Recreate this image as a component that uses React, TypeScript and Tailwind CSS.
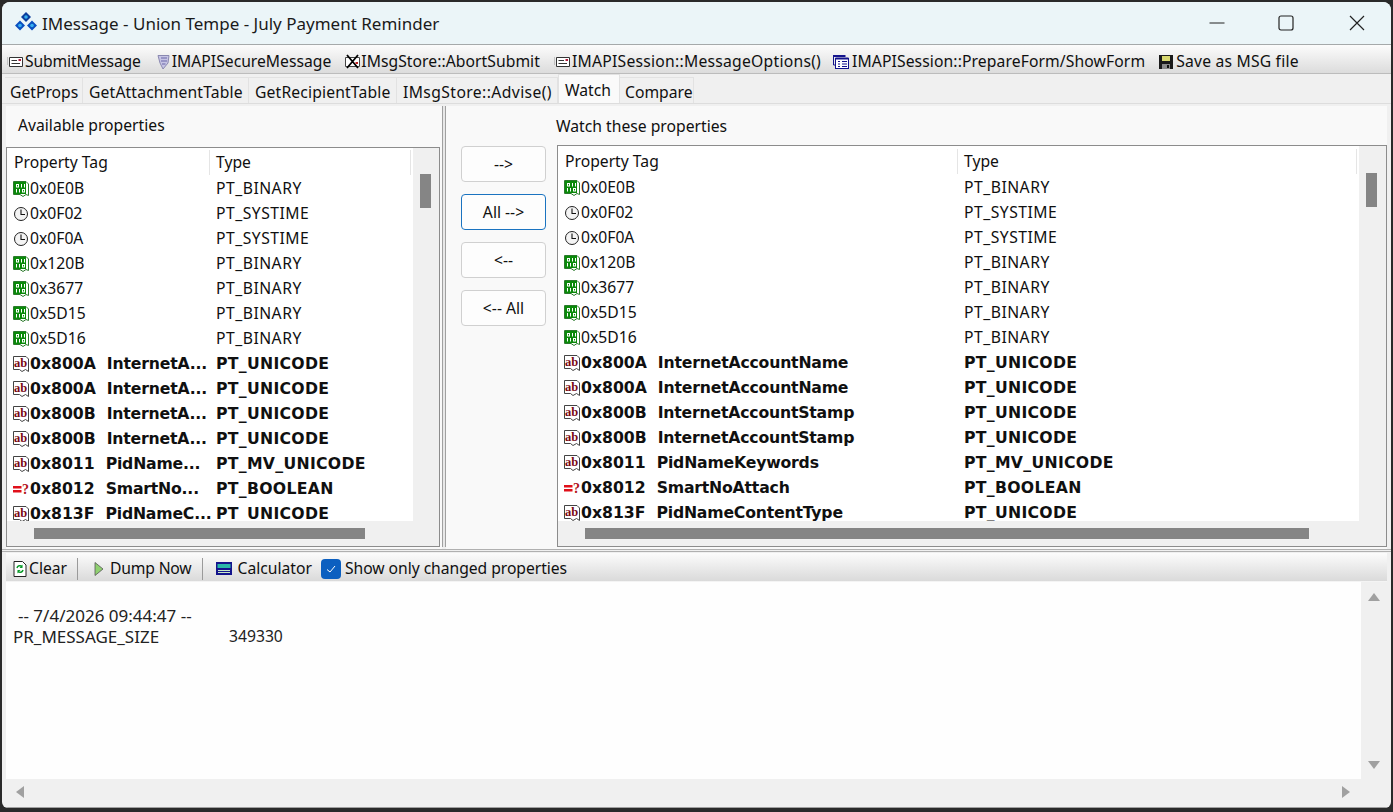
import React from 'react';

const BinaryIcon = () => (
  <svg width="16" height="16" viewBox="0 0 16 16" className="shrink-0">
    <path d="M0.5 0.5H13L15.500 3V14.500L13 13.500L10 15.500L7 13.500H0.500Z" fill="#fff" stroke="#2c7a2c" />
    <rect x="1" y="1" width="12" height="12" fill="#0a8a0a" />
    <path fillRule="evenodd" d="M3 3h3v3.500H3zM4 4v1.500h1V4zM8 3h1v3.500H8zM11 3h1v3.500h-1zM3 8h1v3.500H3zM6 8h1v3.500H6zM9 8h3v3.500H9zM10 9v1.500h1V9z" fill="#fff" />
  </svg>
);

const ClockIcon = () => (
  <svg width="16" height="16" viewBox="0 0 16 16" className="shrink-0">
    <circle cx="8" cy="8" r="6.500" fill="#f4f4f4" stroke="#222" strokeWidth="1" />
    <path d="M8 3.500V8.500H12" fill="none" stroke="#111" strokeWidth="1.100" />
  </svg>
);

const TextIcon = () => (
  <svg width="16" height="16" viewBox="0 0 16 16" className="shrink-0">
    <path d="M0.500 0.500H13L15.500 3V15.500L12.500 13.500L9 15.500L6.500 13.500H0.500Z" fill="#fff" stroke="#444" />
    <text x="7.500" y="10.500" textAnchor="middle" fontFamily="'Liberation Serif', serif" fontWeight="700" fontSize="12.500" fill="#7a0a14">ab</text>
  </svg>
);

const BoolIcon = () => (
  <svg width="16" height="16" viewBox="0 0 16 16" className="shrink-0">
    <path d="M0 5h8.500v2.500H0zM0 9h8.500v2.500H0z" fill="#e0101a" />
    <text x="12.500" y="13" textAnchor="middle" fontFamily="'Liberation Serif', serif" fontWeight="700" fontSize="14" fill="#b01018">?</text>
  </svg>
);

type Kind = 'bin' | 'time' | 'text' | 'bool';

interface Row {
  kind: Kind;
  tag: string;
  short?: string;
  name?: string;
  type: string;
}

const rows: Row[] = [
  { kind: 'bin', tag: '0x0E0B', type: 'PT_BINARY' },
  { kind: 'time', tag: '0x0F02', type: 'PT_SYSTIME' },
  { kind: 'time', tag: '0x0F0A', type: 'PT_SYSTIME' },
  { kind: 'bin', tag: '0x120B', type: 'PT_BINARY' },
  { kind: 'bin', tag: '0x3677', type: 'PT_BINARY' },
  { kind: 'bin', tag: '0x5D15', type: 'PT_BINARY' },
  { kind: 'bin', tag: '0x5D16', type: 'PT_BINARY' },
  { kind: 'text', tag: '0x800A', short: 'InternetA...', name: 'InternetAccountName', type: 'PT_UNICODE' },
  { kind: 'text', tag: '0x800A', short: 'InternetA...', name: 'InternetAccountName', type: 'PT_UNICODE' },
  { kind: 'text', tag: '0x800B', short: 'InternetA...', name: 'InternetAccountStamp', type: 'PT_UNICODE' },
  { kind: 'text', tag: '0x800B', short: 'InternetA...', name: 'InternetAccountStamp', type: 'PT_UNICODE' },
  { kind: 'text', tag: '0x8011', short: 'PidName...', name: 'PidNameKeywords', type: 'PT_MV_UNICODE' },
  { kind: 'bool', tag: '0x8012', short: 'SmartNo...', name: 'SmartNoAttach', type: 'PT_BOOLEAN' },
  { kind: 'text', tag: '0x813F', short: 'PidNameC...', name: 'PidNameContentType', type: 'PT_UNICODE' },
];

const RowIcon = ({ kind }: { kind: Kind }) => {
  if (kind === 'bin') return <BinaryIcon />;
  if (kind === 'time') return <ClockIcon />;
  if (kind === 'bool') return <BoolIcon />;
  return <TextIcon />;
};

interface PropListProps {
  firstCol: string;
  wide?: boolean;
  headerClass: string;
  barClass: string;
  hPad: string;
  box: string;
}

const PropList: React.FC<PropListProps> = ({ firstCol, wide, headerClass, barClass, hPad, box }) => (
  <div className={`flex flex-col border border-[#8c8c8c] bg-[#f0f0f0] ${box}`}>
    <div className="flex min-h-0 flex-1">
      <div className="flex min-w-0 flex-1 flex-col overflow-hidden bg-white">
        <div className={`flex shrink-0 items-center ${headerClass}`}>
          <div className={`${firstCol} flex h-full items-center border-r border-[#e5e5e5] pl-[7px]`}>Property Tag</div>
          <div className="flex h-full flex-1 items-center border-r border-[#e5e5e5] pl-[6px]">Type</div>
          <div className="w-[2px]" />
        </div>
        {rows.map((r, i) => (
          <div
            key={i}
            className={`flex h-[25px] shrink-0 items-center pt-[2px] ${
              r.short ? "font-['DejaVu_Sans',sans-serif] text-[15.7px] font-bold" : ''
            }`}
          >
            <div className={`${firstCol} flex items-center whitespace-pre pl-[6px]`}>
              <RowIcon kind={r.kind} />
              <span className="ml-px">
                {r.tag}
                {r.short ? '  ' : ''}
                <span className="tracking-[-0.2px]">{wide ? r.name : r.short}</span>
              </span>
            </div>
            <div className={`pl-[6px] ${r.short ? 'tracking-[0.3px]' : 'tracking-[0.5px]'}`}>{r.type}</div>
          </div>
        ))}
      </div>
      <div className={`flex shrink-0 pl-[7px] ${barClass}`}>
        <div className="h-[34px] w-[11px] bg-[#858585]" />
      </div>
    </div>
    <div className={`flex h-[25px] shrink-0 items-center ${hPad}`}>
      <div className="h-[11px] w-full bg-[#858585]" />
    </div>
  </div>
);

const MoveButton = ({ label, active }: { label: string; active?: boolean }) => (
  <button
    className={`h-[36px] w-[85px] rounded-[4px] border bg-[#fdfdfd] pt-[2px] ${active ? 'border-[#1a73c0]' : 'border-[#d0d0d0]'}`}
  >
    {label}
  </button>
);

const ToolItem = ({ icon, label, className }: { icon: React.ReactNode; label: string; className?: string }) => (
  <div className={`flex items-center whitespace-pre ${className ?? ''}`}>
    {icon}
    <span>{label}</span>
  </div>
);

const MailIcon = () => (
  <svg width="16" height="16" viewBox="0 0 16 16" className="mr-[2px]">
    <path d="M0 4h1M0 6h1M0 8h1M0 10h1" stroke="#999" />
    <path d="M2.500 3.500H15.500V12.500H2.500Z" fill="#fff" stroke="#333" />
    <path d="M4.500 6.500H10M4.500 9.500H13" stroke="#333" />
    <rect x="11.500" y="5" width="2.500" height="2" fill="#b02040" />
  </svg>
);

const tabs = [
  { label: 'GetProps', w: 'w-[78px] pl-[5px]' },
  { label: 'GetAttachmentTable', w: 'w-[166px] pl-[6px] tracking-[0.15px]' },
  { label: 'GetRecipientTable', w: 'w-[148px] pl-[6px] tracking-[0.15px]' },
  { label: 'IMsgStore::Advise()', w: 'w-[161px] pl-[6px] tracking-[0.4px]' },
];

export default function App() {
  return (
    <div className="h-[812px] w-[1393px] overflow-hidden bg-[#2a2a2a] pl-[2px] pr-[2px] pt-[2px] font-['Noto_Sans',sans-serif] text-[15.7px] leading-none text-[#101010]">
      <div className="flex h-[806px] flex-col overflow-hidden rounded-t-[8px] rounded-b-[6px] bg-[#f0f0f0]">
        {/* title bar */}
        <div className="flex h-[43px] shrink-0 items-center border-b border-[#a5a9aa] bg-[#ebf5f8] pl-[12px]">
          <svg width="24" height="24" viewBox="0 0 24 24" className="shrink-0">
            <path d="M12 1l5 5-5 5-5-5z" fill="#0b3d9c" />
            <path d="M6 9.500l5 5-5 5-5-5zM18 9.500l5 5-5 5-5-5z" fill="#0b50c0" />
            <circle cx="12" cy="6" r="1.800" fill="#38b0f0" />
            <circle cx="6" cy="14.500" r="1.800" fill="#38b0f0" />
            <circle cx="18" cy="14.500" r="1.800" fill="#38b0f0" />
          </svg>
          <div className="ml-[4px] text-[17px] text-[#1a1a1a]">IMessage - Union Tempe - July Payment Reminder</div>
          <div className="ml-auto flex items-center">
            <svg width="16" height="16" viewBox="0 0 16 16" className="mr-[53px]">
              <path d="M0.500 8H15.500" stroke="#222" strokeWidth="1" />
            </svg>
            <svg width="16" height="16" viewBox="0 0 16 16" className="mr-[55px]">
              <rect x="1" y="1" width="14" height="14" rx="2" fill="none" stroke="#222" strokeWidth="1.200" />
            </svg>
            <svg width="16" height="16" viewBox="0 0 16 16" className="mr-[26px]">
              <path d="M1 1L15 15M15 1L1 15" stroke="#222" strokeWidth="1.200" />
            </svg>
          </div>
        </div>

        {/* message toolbar */}
        <div className="flex h-[29px] shrink-0 items-center border-b border-[#bcbcbc] bg-gradient-to-b from-[#fcfcfc] to-[#dcdcdc] pl-[5px] pt-[5px]">
          <ToolItem className="tracking-[-0.15px]" label="SubmitMessage" icon={<MailIcon />} />
          <ToolItem
            className="ml-[14px]"
            label="IMAPISecureMessage"
            icon={
              <svg width="16" height="16" viewBox="0 0 16 16" className="mr-px">
                <path d="M3 1.500H14L13 9L8 15L5 9Z" fill="#c6c4e4" stroke="#8a88b0" />
                <path d="M6 4H12M6 7H12M7 10H10.500" stroke="#6a66a8" />
              </svg>
            }
          />
          <ToolItem
            className="ml-[13px] tracking-[0.05px]"
            label="IMsgStore::AbortSubmit"
            icon={
              <svg width="16" height="16" viewBox="0 0 16 16" className="mr-px">
                <path d="M1.500 3.500H15.500V12.500H1.500Z" fill="#fff" stroke="#444" />
                <path d="M3 1L14 14M14 1L3 14" stroke="#000" strokeWidth="1.800" />
                <rect x="11.500" y="8" width="2.500" height="2" fill="#c02020" />
              </svg>
            }
          />
          <ToolItem className="ml-[14px] tracking-[0.25px]" label="IMAPISession::MessageOptions()" icon={<MailIcon />} />
          <ToolItem
            className="ml-[12px] tracking-[0.1px]"
            label="IMAPISession::PrepareForm/ShowForm"
            icon={
              <svg width="16" height="16" viewBox="0 0 16 16" className="mr-[3px]">
                <rect x="0.500" y="1" width="12" height="2" fill="#14148c" />
                <path d="M0.500 1V11H2.500" fill="none" stroke="#14148c" />
                <rect x="2.500" y="4.500" width="13" height="10" fill="#fff" stroke="#14148c" />
                <rect x="2.500" y="3.500" width="13" height="2" fill="#14148c" />
                <path d="M5 7.500H7M5 10H7M5 12.500H7M9 7.500H14M9 10H14M9 12.500H14" stroke="#14148c" />
              </svg>
            }
          />
          <ToolItem
            className="ml-[13px] tracking-[0.2px]"
            label="Save as MSG file"
            icon={
              <svg width="16" height="16" viewBox="0 0 16 16" className="mr-[2px]">
                <path d="M1 1H15V15H1Z" fill="#1a1a1a" />
                <rect x="4" y="2" width="8" height="5" fill="#d8d870" />
                <rect x="4" y="10" width="8" height="5" fill="#8a8a8a" />
                <rect x="9" y="11" width="2" height="3" fill="#111" />
              </svg>
            }
          />
        </div>

        {/* tabs */}
        <div className="flex h-[30px] shrink-0 items-end border-b border-[#dddddd] pl-[3px]">
          {tabs.map((t) => (
            <div key={t.label} className={`flex h-[26px] items-center border-r border-t border-[#e2e2e2] pt-[5px] ${t.w}`}>{t.label}</div>
          ))}
          <div className="flex h-[29px] w-[62px] items-center border-x border-t border-[#e2e2e2] bg-[#fafafa] pl-[6px] pt-[4px]">Watch</div>
          <div className="flex h-[26px] w-[74px] items-center border-r border-t border-[#e2e2e2] pl-[5px] pt-[5px]">Compare</div>
        </div>

        {/* watch page */}
        <div className="flex h-[445px] shrink-0 pl-[4px] pr-[4px] pt-[2px]">
          <div className="flex w-[436px] shrink-0 flex-col bg-[#f9f9f9]">
            <div className="flex h-[41px] shrink-0 items-center pb-[2px] pl-[12px]">Available properties</div>
            <PropList
              firstCol="w-[203px]"
              headerClass="h-[27px] pt-[2px]"
              barClass="w-[26px] pt-[26px]"
              hPad="pl-[27px] pr-[74px]"
              box="h-[400px] w-[434px]"
            />
          </div>
          <div className="h-[441px] w-[4px] shrink-0 border-x border-[#a0a0a0] bg-[#e8e8e8]" />
          <div className="flex min-w-0 flex-1 bg-[#f9f9f9]">
            <div className="flex w-[111px] shrink-0 flex-col gap-[12px] pl-[15px] pt-[40px]">
              <MoveButton label="-->" />
              <MoveButton label="All -->" active />
              <MoveButton label="<--" />
              <MoveButton label="<-- All" />
            </div>
            <div className="flex min-w-0 flex-1 flex-col">
              <div className="-ml-px flex h-[39px] shrink-0 items-center pt-[2px]">Watch these properties</div>
              <PropList
                firstCol="w-[400px]"
                wide
                headerClass="h-[28px] pt-[3px]"
                barClass="w-[27px] pt-[27px]"
                hPad="pl-[27px] pr-[77px]"
                box="h-[402px] w-[830px]"
              />
            </div>
          </div>
        </div>

        {/* lower pane */}
        <div className="h-[3px] shrink-0 border-y border-[#b0b0b0]" />
        <div className="mx-[4px] mt-px flex h-[28px] shrink-0 items-center bg-gradient-to-b from-[#fcfcfc] to-[#dadada] pl-[6px] pt-[4px]">
          <ToolItem
            label="Clear"
            icon={
              <svg width="16" height="16" viewBox="0 0 16 16" className="mr-px">
                <path d="M2 0.500H10.500L14 4V15.500H2Z" fill="#fff" stroke="#222" />
                <path d="M5 7A3 3 0 0 1 10 5.500M11 9A3 3 0 0 1 6 10.500" fill="none" stroke="#0a9a2a" strokeWidth="1.500" />
                <path d="M10.500 3.500V7H7.500ZM5.500 12.500V9H8.500Z" fill="#0a9a2a" />
              </svg>
            }
          />
          <div className="ml-[10px] h-[22px] w-px bg-[#9a9a9a]" />
          <ToolItem
            className="ml-[16px] tracking-[-0.2px]"
            label="Dump Now"
            icon={
              <svg width="10" height="14" viewBox="0 0 10 14" className="mr-[6px]">
                <path d="M1 0.500L9 7L1 13.500Z" fill="#8fd070" stroke="#555" strokeWidth="0.800" />
              </svg>
            }
          />
          <div className="ml-[11px] h-[22px] w-px bg-[#9a9a9a]" />
          <ToolItem
            className="ml-[13px]"
            label="Calculator"
            icon={
              <svg width="16" height="13" viewBox="0 0 16 13" className="mr-[5px]">
                <rect width="16" height="13" fill="#14148c" />
                <rect x="1.500" y="2" width="13" height="4" fill="#2ab8a8" />
                <path d="M2 8h12v1H2zM2 10h12v1H2z" fill="#c8e8c8" />
              </svg>
            }
          />
          <div className="ml-[9px] flex h-[20px] w-[20px] items-center justify-center rounded-[4px] bg-[#0b5fc0]">
            <svg width="12" height="12" viewBox="0 0 12 12">
              <path d="M2 6.500L5 9L10 3" fill="none" stroke="#fff" strokeWidth="1" />
            </svg>
          </div>
          <span className="ml-[4px] tracking-[-0.05px]">Show only changed properties</span>
        </div>

        <div className="mx-[4px] flex min-h-0 flex-1 flex-col border-t border-[#f4f4f4]">
          <div className="flex min-h-0 flex-1">
            <div className="flex-1 whitespace-pre bg-[#fefefe] pl-[7px] pt-[23px] text-[17px] leading-[21px] text-[#222]">
              <div className="pl-[5px]">-- 7/4/2026 09:44:47 --</div>
              <div className="flex">
                <span className="w-[216px]">PR_MESSAGE_SIZE</span>
                <span className="text-[15.7px]">349330</span>
              </div>
            </div>
            <div className="flex w-[26px] shrink-0 flex-col items-center justify-between pb-[9px] pt-[11px]">
              <svg width="12" height="9" viewBox="0 0 12 9"><path d="M6 0L12 8H0Z" fill="#a0a0a0" /></svg>
              <svg width="12" height="9" viewBox="0 0 12 9"><path d="M6 8L12 0H0Z" fill="#a0a0a0" /></svg>
            </div>
          </div>
          <div className="flex h-[29px] shrink-0 items-center justify-between border-b border-[#a0a0a0] pb-[2px] pl-[10px] pr-[36px]">
            <svg width="9" height="12" viewBox="0 0 9 12"><path d="M0 6L8 0V12Z" fill="#a0a0a0" /></svg>
            <svg width="9" height="12" viewBox="0 0 9 12"><path d="M8 6L0 0V12Z" fill="#a0a0a0" /></svg>
          </div>
        </div>
      </div>
    </div>
  );
}
